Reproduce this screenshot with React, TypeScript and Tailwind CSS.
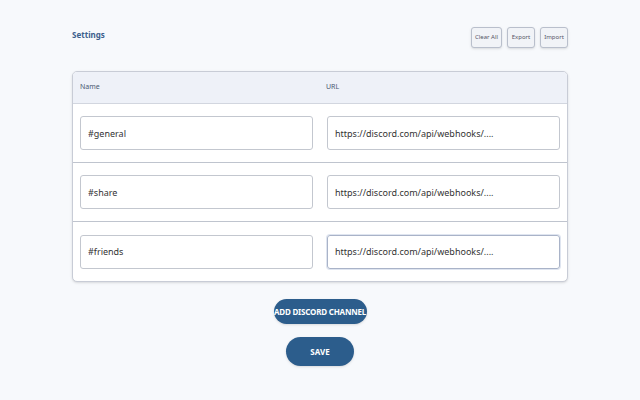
export default function App() {
  const rows = ["#general", "#share", "#friends"];
  return (
    <div className="w-[640px] h-[400px] bg-[#f7f9fc] [font-family:'Liberation_Sans',Arial,sans-serif] px-[72px] pt-[27px]">
      <div className="flex justify-between items-start">
        <h1 className="text-[8px] font-bold text-[#3b5f8c] mt-[2px]">Settings</h1>
        <div className="flex gap-[5px]">
          {["Clear All", "Export", "Import"].map((b) => (
            <button
              key={b}
              className={`h-[21px] ${b === "Clear All" ? "w-[31px]" : "w-[28px]"} text-[6px] text-[#556] bg-[#f1f3f7] border border-[#b9bfcc] rounded-[3px] shadow-sm`}
            >
              {b}
            </button>
          ))}
        </div>
      </div>
      <div className="mt-[23px] border border-[#c8ccd6] rounded-[5px] bg-white overflow-hidden shadow-sm">
        <div className="h-[32px] bg-[#eef1f8] border-b border-[#d2d6df] grid grid-cols-2 items-center text-[7px] text-[#4a5a74]">
          <span className="pl-[7px]">Name</span>
          <span className="pl-[6px]">URL</span>
        </div>
        {rows.map((r, i) => (
          <div
            key={r}
            className={`h-[59px] grid grid-cols-2 gap-[14px] items-center px-[7px] ${i < 2 ? "border-b border-[#bfc4ce]" : ""}`}
          >
            <input
              defaultValue={r}
              className="h-[34px] px-[7px] text-[9px] text-[#333] border border-[#c3c7cf] rounded-[3px] outline-none"
            />
            <input
              defaultValue="https://discord.com/api/webhooks/...."
              className={`h-[34px] px-[7px] text-[9px] text-[#333] border rounded-[3px] outline-none ${i === 2 ? "border-[#a9b3c8] shadow-[0_0_0_1px_#dfe5f0]" : "border-[#c3c7cf]"}`}
            />
          </div>
        ))}
      </div>
      <div className="flex flex-col items-center mt-[17px] gap-[13px]">
        <button className="w-[93px] h-[25px] rounded-full bg-[#2c5d8c] text-white text-[8px] font-bold tracking-tight shadow">
          ADD DISCORD CHANNEL
        </button>
        <button className="w-[68px] h-[29px] rounded-full bg-[#2c5d8c] text-white text-[8px] font-bold shadow">
          SAVE
        </button>
      </div>
    </div>
  );
}
